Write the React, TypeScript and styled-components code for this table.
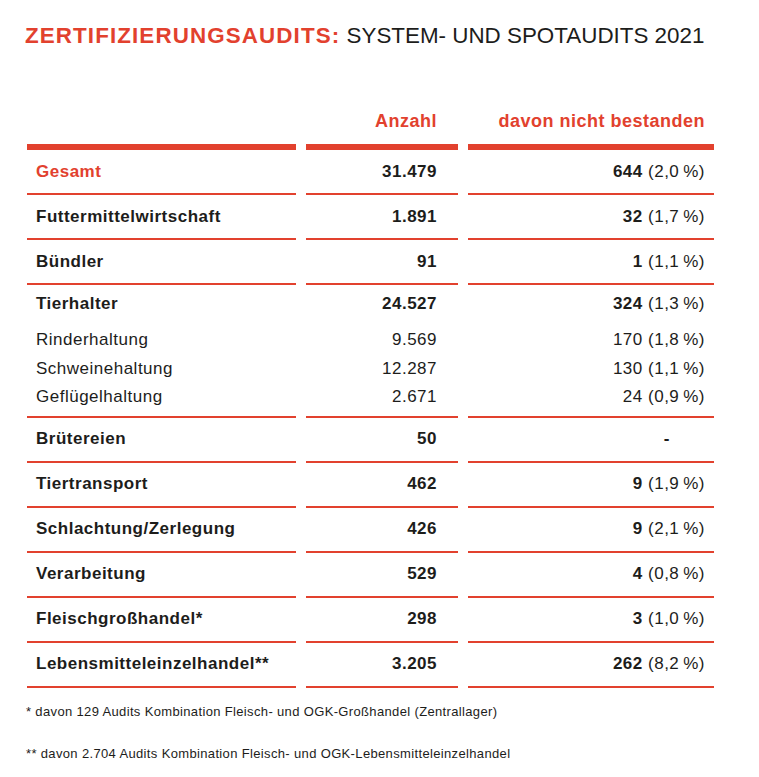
import React from "react";
import styled, { createGlobalStyle } from "styled-components";

const RED = "#e2412e";
const INK = "#1d1d1b";

const Global = createGlobalStyle`
  html, body { margin: 0; padding: 0; background: #ffffff; }
  body { font-family: "Liberation Sans", Arial, sans-serif; color: ${INK}; }
`;

const Page = styled.div`
  width: 759px;
  min-height: 777px;
  box-sizing: border-box;
  padding: 25px 0 0 0;
`;

const Title = styled.h1`
  margin: 0 0 0 25px;
  font-size: 22.4px;
  line-height: 22px;
  font-weight: 400;
  white-space: nowrap;
`;

const TitleAccent = styled.span`
  color: ${RED};
  font-weight: 700;
  letter-spacing: 1.1px;
`;

const TitleRest = styled.span`
  color: ${INK};
`;

const Table = styled.div`
  margin: 63px 0 0 27px;
  width: 687px;
  display: flex;
  flex-direction: column;
`;

const Row = styled.div`
  display: grid;
  grid-template-columns: 269px 152px 246px;
  column-gap: 10px;
`;

type Col = 1 | 2 | 3;

const padFor = (c: Col) =>
  c === 1 ? "0 0 0 9px" : c === 2 ? "0 21px 0 0" : "0 9px 0 0";

const HeadCell = styled.div<{ $col: Col }>`
  border-bottom: 6px solid ${RED};
  padding: ${(p) => padFor(p.$col)};
  padding-bottom: 12px;
  text-align: right;
  color: ${RED};
  font-weight: 700;
  font-size: 18px;
  line-height: 22px;
  letter-spacing: 0.5px;
  white-space: nowrap;
`;

const Cell = styled.div<{ $col: Col; $extraRight?: number }>`
  border-bottom: 2px solid ${RED};
  height: 43px;
  box-sizing: content-box;
  display: flex;
  align-items: center;
  justify-content: ${(p) => (p.$col === 1 ? "flex-start" : "flex-end")};
  padding: ${(p) => padFor(p.$col)};
  ${(p) => (p.$extraRight ? `padding-right: ${p.$extraRight}px;` : "")}
  font-size: 17px;
  letter-spacing: 0.5px;
  white-space: nowrap;
`;

const GroupCell = styled.div<{ $col: Col }>`
  border-bottom: 2px solid ${RED};
  display: flex;
  flex-direction: column;
  align-items: ${(p) => (p.$col === 1 ? "flex-start" : "flex-end")};
  padding: ${(p) => padFor(p.$col)};
  padding-top: 5px;
  padding-bottom: 4px;
  font-size: 17px;
  letter-spacing: 0.5px;
  white-space: nowrap;
`;

const Line = styled.div<{ $h: number; $gap?: number }>`
  height: ${(p) => p.$h}px;
  line-height: ${(p) => p.$h}px;
  margin-top: ${(p) => p.$gap ?? 0}px;
`;

const Label = styled.span<{ $bold?: boolean; $red?: boolean }>`
  font-weight: ${(p) => (p.$bold ? 700 : 400)};
  color: ${(p) => (p.$red ? RED : INK)};
`;

const Strong = styled.b`
  font-weight: 700;
`;

const Notes = styled.div`
  margin: 16px 0 0 26px;
  display: flex;
  flex-direction: column;
  gap: 26px;
`;

const Note = styled.p`
  margin: 0;
  font-size: 13px;
  line-height: 16px;
  letter-spacing: 0.35px;
  color: ${INK};
  white-space: nowrap;
`;

type Item = {
  label: string;
  count: string;
  failed?: string;
  pct?: string;
  red?: boolean;
};

const T = "\u2009";

const before: Item[] = [
  { label: "Gesamt", count: "31.479", failed: "644", pct: `(2,0${T}%)`, red: true },
  { label: "Futtermittelwirtschaft", count: "1.891", failed: "32", pct: `(1,7${T}%)` },
  { label: "Bündler", count: "91", failed: "1", pct: `(1,1${T}%)` },
];

const subs: Item[] = [
  { label: "Rinderhaltung", count: "9.569", failed: "170", pct: `(1,8${T}%)` },
  { label: "Schweinehaltung", count: "12.287", failed: "130", pct: `(1,1${T}%)` },
  { label: "Geflügelhaltung", count: "2.671", failed: "24", pct: `(0,9${T}%)` },
];

const after: Item[] = [
  { label: "Brütereien", count: "50" },
  { label: "Tiertransport", count: "462", failed: "9", pct: `(1,9${T}%)` },
  { label: "Schlachtung/Zerlegung", count: "426", failed: "9", pct: `(2,1${T}%)` },
  { label: "Verarbeitung", count: "529", failed: "4", pct: `(0,8${T}%)` },
  { label: "Fleischgroßhandel*", count: "298", failed: "3", pct: `(1,0${T}%)` },
  { label: "Lebensmitteleinzelhandel**", count: "3.205", failed: "262", pct: `(8,2${T}%)` },
];

const MainRow: React.FC<{ item: Item }> = ({ item }) => (
  <Row>
    <Cell $col={1}>
      <Label $bold $red={item.red}>{item.label}</Label>
    </Cell>
    <Cell $col={2}>
      <Label $bold>{item.count}</Label>
    </Cell>
    {item.failed ? (
      <Cell $col={3}>
        <span>
          <Strong>{item.failed}</Strong> {item.pct}
        </span>
      </Cell>
    ) : (
      <Cell $col={3} $extraRight={44}>
        <Label $bold>-</Label>
      </Cell>
    )}
  </Row>
);

const group: Item = { label: "Tierhalter", count: "24.527", failed: "324", pct: `(1,3${T}%)` };

export default function App() {
  return (
    <Page>
      <Global />
      <Title>
        <TitleAccent>ZERTIFIZIERUNGSAUDITS:</TitleAccent>{" "}
        <TitleRest>SYSTEM- UND SPOTAUDITS 2021</TitleRest>
      </Title>
      <Table>
        <Row>
          <HeadCell $col={1}>&nbsp;</HeadCell>
          <HeadCell $col={2}>Anzahl</HeadCell>
          <HeadCell $col={3}>davon nicht bestanden</HeadCell>
        </Row>
        {before.map((it) => (
          <MainRow key={it.label} item={it} />
        ))}
        <Row>
          <GroupCell $col={1}>
            <Line $h={28}>
              <Label $bold>{group.label}</Label>
            </Line>
            {subs.map((s, i) => (
              <Line key={s.label} $h={28.5} $gap={i === 0 ? 8 : 0}>
                {s.label}
              </Line>
            ))}
          </GroupCell>
          <GroupCell $col={2}>
            <Line $h={28}>
              <Label $bold>{group.count}</Label>
            </Line>
            {subs.map((s, i) => (
              <Line key={s.label} $h={28.5} $gap={i === 0 ? 8 : 0}>
                {s.count}
              </Line>
            ))}
          </GroupCell>
          <GroupCell $col={3}>
            <Line $h={28}>
              <Strong>{group.failed}</Strong> {group.pct}
            </Line>
            {subs.map((s, i) => (
              <Line key={s.label} $h={28.5} $gap={i === 0 ? 8 : 0}>
                {s.failed} {s.pct}
              </Line>
            ))}
          </GroupCell>
        </Row>
        {after.map((it) => (
          <MainRow key={it.label} item={it} />
        ))}
      </Table>
      <Notes>
        <Note>* davon 129 Audits Kombination Fleisch- und OGK-Großhandel (Zentrallager)</Note>
        <Note>** davon 2.704 Audits Kombination Fleisch- und OGK-Lebensmitteleinzelhandel</Note>
      </Notes>
    </Page>
  );
}
